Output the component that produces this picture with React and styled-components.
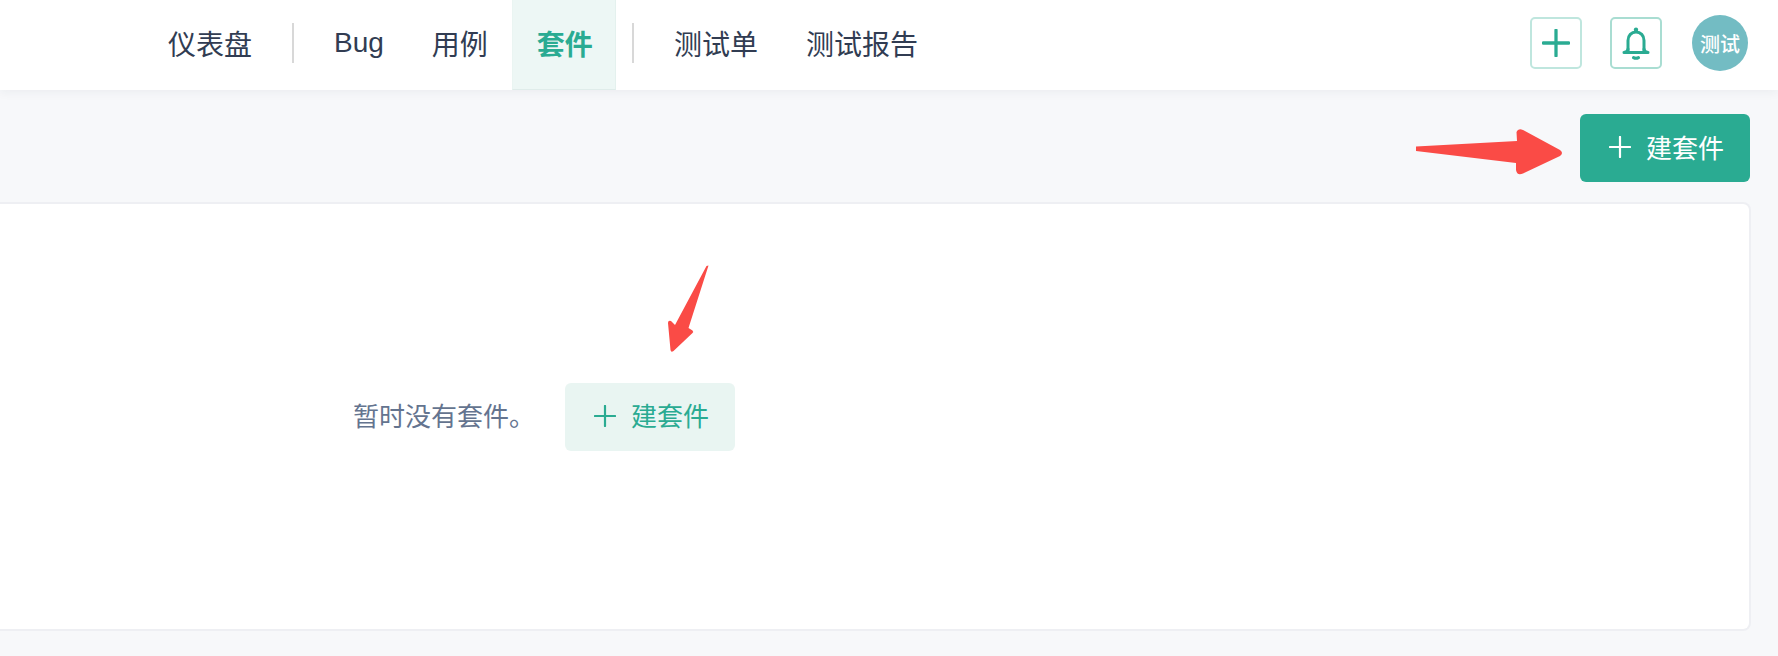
import React from "react";
import styled, { createGlobalStyle } from "styled-components";

const navItems = [
	{ label: "仪表盘" },
	{ divider: true },
	{ label: "Bug" },
	{ label: "用例" },
	{ label: "套件", active: true },
	{ divider: true },
	{ label: "测试单" },
	{ label: "测试报告" },
];

function PlusIcon({ size = 24, weight = 2 }) {
	return (
		<svg width={size} height={size} viewBox="0 0 24 24" fill="none" stroke="currentColor" strokeWidth={weight} strokeLinecap="round">
			<path d="M12 1v22M1 12h22" />
		</svg>
	);
}

function BellIcon() {
	return (
		<svg width="28" height="34" viewBox="0 0 28 34" fill="none" stroke="currentColor" strokeWidth="3" strokeLinejoin="round" strokeLinecap="round">
			<path d="M6 25V14.500C6 9.500 9.400 6 14 6s8 3.500 8 8.500V25" />
			<path d="M2 26.500c2.400-.5 4-1.500 4-3.500M26 26.500c-2.400-.5-4-1.500-4-3.500M2 26.500h24" />
			<circle cx="14" cy="3.800" r="2.200" fill="currentColor" stroke="none" />
			<path d="M11.500 31.600c1.500.8 3.500.8 5 0" />
		</svg>
	);
}

function App() {
	return (
		<Page>
			<GlobalStyle />
			<Header>
				<Nav>
					{navItems.map((item, i) =>
						item.divider ? (
							<NavDivider key={i} />
						) : (
							<NavItem key={i} $active={item.active} $latin={item.label === "Bug"}>
								{item.label}
							</NavItem>
						)
					)}
				</Nav>
				<HeaderRight>
					<IconButton $border="#bfe6de"><PlusIcon size={28} weight={2.8} /></IconButton>
					<IconButton $border="#a9ddd2"><BellIcon /></IconButton>
					<Avatar>测试</Avatar>
				</HeaderRight>
			</Header>

			<Main>
				<Toolbar>
					<CreateButton>
						<PlusIcon size={22} weight={2.4} />
						<ButtonLabel>建套件</ButtonLabel>
					</CreateButton>
				</Toolbar>
				<Card>
					<EmptyText>暂时没有套件。</EmptyText>
					<CreateButton $light>
						<PlusIcon size={22} weight={2.4} />
						<ButtonLabel>建套件</ButtonLabel>
					</CreateButton>
				</Card>
			</Main>

			<ArrowLayer width="1778" height="656" viewBox="0 0 1778 656">
				<path
					d="M1416 146.500L1517 141L1516.500 132Q1518 128 1523 130L1560 150Q1564 153 1560 156L1523 173.500Q1517 176 1516 170L1516 163L1416 151Z"
					fill="#fa4b46"
				/>
				<path
					d="M708.500 265.500L688.500 328L692.500 330.500Q694 332 692.500 333L673.500 351Q671 353 670.500 350L668 323Q668 320 671 321L675 325L706.500 266Z"
					fill="#fa4b46"
				/>
			</ArrowLayer>
		</Page>
	);
}

export default App;

const GlobalStyle = createGlobalStyle`
	html, body {
		margin: 0;
		padding: 0;
		background: #f7f8fa;
	}

	body {
		font-family: "Liberation Sans", "Noto Sans CJK SC", sans-serif;
	}
`;

const Page = styled.div`
	position: relative;
	width: 1778px;
	height: 656px;
	overflow: hidden;
	background: #f7f8fa;
`;

const Header = styled.header`
	position: relative;
	display: flex;
	align-items: center;
	justify-content: space-between;
	height: 90px;
	padding: 0 30px 0 144px;
	box-sizing: border-box;
	background: #ffffff;
	box-shadow: 0 2px 10px rgba(40, 50, 70, 0.06);
`;

const Nav = styled.nav`
	display: flex;
	align-items: center;
	height: 100%;
`;

const NavItem = styled.a`
	display: flex;
	align-items: center;
	height: 100%;
	padding: 0 ${(p) => (p.$active ? "22px 4px 24px" : "24px 4px")};
	box-sizing: border-box;
	font-size: 28px;
	font-family: ${(p) => (p.$latin ? '"Liberation Sans", sans-serif' : '"Noto Sans CJK SC", sans-serif')};
	font-weight: ${(p) => (p.$active ? 700 : 400)};
	color: ${(p) => (p.$active ? "#2aab92" : "#313c52")};
	background: ${(p) => (p.$active ? "#edf7f5" : "transparent")};
	border-left: ${(p) => (p.$active ? "1px solid #eaf5f2" : "none")};
	border-right: ${(p) => (p.$active ? "1px solid #e4f1ee" : "none")};
	border-bottom: ${(p) => (p.$active ? "1px solid #dfecea" : "none")};
`;

const NavDivider = styled.span`
	width: 2px;
	height: 40px;
	margin: 0 16px 4px;
	background: #d8d8d8;
`;

const HeaderRight = styled.div`
	display: flex;
	align-items: center;
	padding-bottom: 4px;
`;

const IconButton = styled.button`
	display: flex;
	align-items: center;
	justify-content: center;
	width: 52px;
	height: 52px;
	padding: 0;
	margin-right: 28px;
	background: #ffffff;
	color: #2aab92;
	border: 2px solid ${(p) => p.$border};
	border-radius: 5px;
`;

const Avatar = styled.div`
	display: flex;
	align-items: center;
	justify-content: center;
	width: 56px;
	height: 56px;
	margin-left: 2px;
	border-radius: 50%;
	background: #73bcc3;
	color: #ffffff;
	font-family: "Noto Sans CJK SC", sans-serif;
	font-size: 20px;
	font-weight: 500;
`;

const Main = styled.main`
	padding: 24px 0 0 0;
`;

const Toolbar = styled.div`
	display: flex;
	justify-content: flex-end;
	padding-right: 28px;
`;

const CreateButton = styled.button`
	display: flex;
	align-items: center;
	gap: 15px;
	width: 170px;
	height: 68px;
	padding: 0 0 2px 29px;
	box-sizing: border-box;
	border: none;
	border-radius: 6px;
	font-family: "Noto Sans CJK SC", sans-serif;
	font-size: 26px;
	background: ${(p) => (p.$light ? "#e9f5f2" : "#2aab92")};
	color: ${(p) => (p.$light ? "#2aab92" : "#ffffff")};
`;

const ButtonLabel = styled.span`
	margin-top: -2px;
`;

const Card = styled.section`
	display: flex;
	align-items: center;
	height: 425px;
	margin: 22px 29px 0 0;
	padding-left: 353px;
	box-sizing: border-box;
	background: #ffffff;
	border-radius: 0 6px 6px 0;
	box-shadow: 0 0 0 2px #eeeff3;
`;

const EmptyText = styled.span`
	width: 212px;
	margin-top: -4px;
	font-family: "Noto Sans CJK SC", sans-serif;
	font-size: 26px;
	color: #64748f;
`;

const ArrowLayer = styled.svg`
	position: absolute;
	top: 0;
	left: 0;
	pointer-events: none;
`;
